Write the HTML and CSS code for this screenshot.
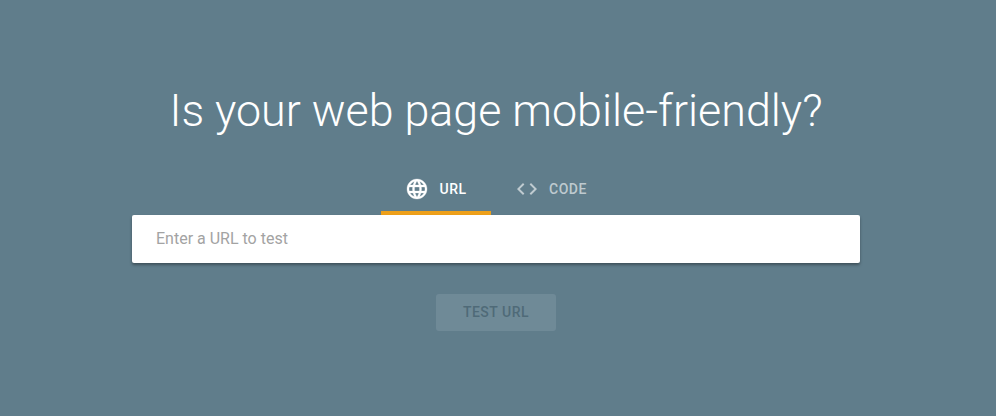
FILE: index.html
```html
<!DOCTYPE html>
<html lang="en">
<head>
    <meta charset="UTF-8">
    <meta name="viewport" content="width=device-width, initial-scale=1.0">
    <title>Mobile-Friendly Test</title>
    <link rel="stylesheet" href="styles.css">
</head>
<body>
    <main class="page">
        <h1 class="title">Is your web page mobile-friendly?</h1>
        <div class="tabs">
            <div class="tab active">
                <svg class="tab-icon" viewBox="0 0 24 24" width="24" height="24">
                    <path fill="currentColor" stroke="currentColor" stroke-width="0.3" d="M11.99 2C6.47 2 2 6.48 2 12s4.47 10 9.99 10C17.52 22 22 17.52 22 12S17.52 2 11.99 2zm6.93 6h-2.95c-.32-1.25-.78-2.45-1.38-3.56 1.84.63 3.37 1.91 4.33 3.56zM12 4.04c.83 1.2 1.48 2.53 1.91 3.96h-3.82c.43-1.43 1.08-2.76 1.91-3.96zM4.26 14C4.1 13.36 4 12.69 4 12s.1-1.36.26-2h3.38c-.08.66-.14 1.32-.14 2 0 .68.06 1.34.14 2H4.26zm.82 2h2.95c.32 1.25.78 2.45 1.38 3.56-1.84-.63-3.37-1.9-4.33-3.56zm2.95-8H5.08c.96-1.66 2.49-2.93 4.33-3.56C8.81 5.55 8.35 6.75 8.03 8zM12 19.96c-.83-1.2-1.48-2.53-1.91-3.96h3.82c-.43 1.43-1.08 2.76-1.91 3.96zM14.34 14H9.66c-.09-.66-.16-1.32-.16-2 0-.68.07-1.35.16-2h4.68c.09.65.16 1.32.16 2 0 .68-.07 1.34-.16 2zm.25 5.56c.6-1.11 1.06-2.31 1.38-3.56h2.95c-.96 1.65-2.49 2.93-4.33 3.56zM16.36 14c.08-.66.14-1.32.14-2 0-.68-.06-1.34-.14-2h3.38c.16.64.26 1.31.26 2s-.1 1.36-.26 2h-3.38z"/>
                </svg>
                <span>URL</span>
            </div>
            <div class="tab">
                <svg class="tab-icon" viewBox="0 0 24 24" width="24" height="24">
                    <path fill="currentColor" d="M9.4 16.6L4.8 12l4.6-4.6L8 6l-6 6 6 6 1.4-1.4zm5.2 0l4.6-4.6-4.6-4.6L16 6l6 6-6 6-1.4-1.4z"/>
                </svg>
                <span>CODE</span>
            </div>
        </div>
        <div class="input-card">
            <input class="url-input" type="text" placeholder="Enter a URL to test">
        </div>
        <button class="test-btn" disabled>TEST URL</button>
    </main>
</body>
</html>
```
FILE: styles.css
```css
body {
    margin: 0;
    height: 100vh;
    background-color: #607d8b;
    font-family: Roboto, 'Liberation Sans', sans-serif;
    overflow: hidden;
}

.page {
    display: flex;
    flex-direction: column;
    align-items: center;
    padding: 83px 4px 0 0;
}

.title {
    margin: 0;
    color: #fff;
    font-size: 44.8px;
    font-weight: 300;
    line-height: 56px;
}

.tabs {
    display: flex;
    gap: 5px;
    margin: 28px 5px 0 0;
}

.tab {
    width: 110px;
    height: 48px;
    box-sizing: border-box;
    display: flex;
    justify-content: center;
    align-items: center;
    gap: 10px;
    color: rgba(255, 255, 255, 0.6);
    font-size: 14px;
    font-weight: 500;
    letter-spacing: 0.5px;
    border-bottom: 4px solid transparent;
}

.tab.active {
    color: #fff;
    border-bottom-color: #eea01a;
}

.tab-icon {
    display: block;
}

.input-card {
    width: 728px;
    height: 48px;
    background-color: #fff;
    border-radius: 2px;
    box-shadow: 0 2px 3px rgba(0, 0, 0, 0.35);
}

.url-input {
    width: 100%;
    height: 100%;
    box-sizing: border-box;
    padding: 0 24px 2px;
    border: none;
    background: none;
    outline: none;
    font-family: inherit;
    font-size: 16px;
    color: #333;
}

.url-input::placeholder {
    color: #a3a3a3;
    opacity: 1;
}

.test-btn {
    width: 120px;
    height: 37px;
    margin-top: 31px;
    padding: 0 0 2px;
    border: none;
    border-radius: 3px;
    background-color: #6f8a97;
    color: #4f6a78;
    font-family: inherit;
    font-size: 14px;
    font-weight: 500;
    letter-spacing: 0.5px;
}
```
